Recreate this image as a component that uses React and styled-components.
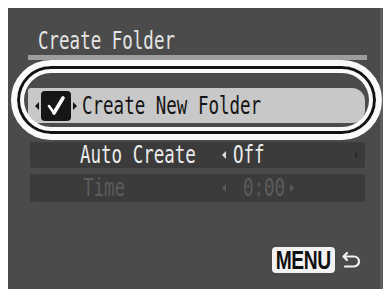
import React from "react"
import styled, { createGlobalStyle } from "styled-components"

const GlobalStyle = createGlobalStyle`
  html, body {
    margin: 0;
    padding: 0;
    background: #ffffff;
  }
  body {
    font-family: "DejaVu Sans Mono", "Liberation Mono", monospace;
  }
`

const Screen = styled.div`
  margin: 8px 0 0 8px;
  width: 372px;
  height: 281px;
  background: #4b4b4b;
  border-right: 3px solid #5d5d5d;
  display: flex;
  flex-direction: column;
  align-items: flex-start;
`

const Glyphs = styled.span`
  display: inline-block;
  white-space: pre;
  transform: scaleY(1.38);
  transform-origin: 50% 50%;
`

const Title = styled.div`
  margin: 24px 0 0 30px;
  height: 18px;
  line-height: 18px;
  font-size: 17.5px;
  color: #e4e4e4;
`

const Underline = styled.div`
  margin: 5px 0 0 20px;
  width: 339px;
  height: 5px;
  background: #9d9d9d;
`

const Rows = styled.div`
  display: flex;
  flex-direction: column;
  margin-top: 28px;
`

const Row = styled.div`
  position: relative;
  display: flex;
  align-items: center;
  box-sizing: border-box;
  height: ${p => p.$h}px;
  width: ${p => (p.$active ? 337 : 335)}px;
  margin: ${p => p.$mt}px 0 0 ${p => (p.$active ? 20 : 22)}px;
  padding-left: ${p => (p.$active ? 7 : 50)}px;
  background: ${p => (p.$active ? "#c8c8c8" : "#3b3b3b")};
  border-radius: ${p => (p.$active ? "3px 13px 13px 3px" : "3px")};
  font-size: 17.5px;
  line-height: 18px;
  color: ${p => (p.$active ? "#141414" : p.$dim ? "#5b5b5b" : "#ececec")};
`

const Ring = styled.div`
  position: absolute;
  left: -17px;
  right: -17px;
  top: -28px;
  bottom: -17px;
  border: 6px solid #fafafa;
  border-radius: 42px;
  box-shadow: inset 0 0 0 3px #121212, inset 0 0 0 7px #fafafa;
  pointer-events: none;
`

const Tri = styled.span`
  width: 0;
  height: 0;
  border-top: 4px solid transparent;
  border-bottom: 4px solid transparent;
  ${p =>
    p.$dir === "left"
      ? `border-right: 4px solid ${p.$color};`
      : `border-left: 4px solid ${p.$color};`}
  margin: 0 ${p => p.$mr || 0}px 0 ${p => p.$ml || 0}px;
  flex: none;
`

const Check = styled.span`
  width: 30px;
  height: 30px;
  border-radius: 4px;
  background: #161616;
  display: flex;
  align-items: center;
  justify-content: center;
  margin: 0 2px;
  flex: none;
`

const Label = styled.span`
  width: ${p => p.$w}px;
  padding-left: ${p => p.$pad || 0}px;
  box-sizing: border-box;
  flex: none;
`

const Value = styled.span`
  margin-left: ${p => p.$gap}px;
`

const Spacer = styled.span`
  flex: 1;
`

const Footer = styled.div`
  align-self: stretch;
  display: flex;
  justify-content: flex-end;
  align-items: center;
  gap: 6px;
  margin-top: 45px;
  padding-right: 17px;
`

const MenuBadge = styled.div`
  width: 63px;
  height: 26px;
  border-radius: 4px;
  background: #f2f2f2;
  display: flex;
  align-items: center;
  justify-content: center;
  overflow: visible;
  font-family: "Liberation Sans", Arial, sans-serif;
  font-weight: bold;
  font-size: 26px;
  line-height: 26px;
  color: #111;
`

const MenuText = styled.span`
  display: inline-block;
  transform: scaleX(0.74);
  letter-spacing: -0.5px;
`

const BackIcon = () => (
  <svg width="22" height="18" viewBox="0 0 22 18" fill="none" stroke="#f2f2f2" strokeWidth="2.2" strokeLinecap="round" strokeLinejoin="round">
    <path d="M6 2 L2.5 5.5 L6 9" />
    <path d="M3 5.5 H13 A5 5 0 0 1 13 15.5 H4" />
  </svg>
)

const CheckMark = () => (
  <svg width="22" height="22" viewBox="0 0 22 22" fill="none" stroke="#fafafa" strokeLinecap="round" strokeLinejoin="round">
    <path d="M4 11 L9 18" strokeWidth="2.6" />
    <path d="M9 18 L18 3" strokeWidth="3.6" />
  </svg>
)

const App = () => {
  return (
    <>
      <GlobalStyle />
      <Screen>
        <Title>
          <Glyphs>Create Folder</Glyphs>
        </Title>
        <Underline />
        <Rows>
          <Row $active $h={35} $mt={0}>
            <Tri $dir="left" $color="#141414" />
            <Check>
              <CheckMark />
            </Check>
            <Tri $dir="right" $color="#141414" $mr={5} />
            <Glyphs>Create New Folder</Glyphs>
            <Ring />
          </Row>
          <Row $h={26} $mt={19}>
            <Label $w={142}>
              <Glyphs>Auto Create</Glyphs>
            </Label>
            <Tri $dir="left" $color="#dcdcdc" />
            <Value $gap={7}>
              <Glyphs>Off</Glyphs>
            </Value>
            <Spacer />
            <Tri $dir="right" $color="#2c2c2c" $mr={6} />
          </Row>
          <Row $dim $h={28} $mt={6}>
            <Label $w={142} $pad={3}>
              <Glyphs>Time</Glyphs>
            </Label>
            <Tri $dir="left" $color="#5b5b5b" />
            <Value $gap={17}>
              <Glyphs>0:00</Glyphs>
            </Value>
            <Tri $dir="right" $color="#5b5b5b" $ml={5} />
          </Row>
        </Rows>
        <Footer>
          <MenuBadge>
            <MenuText>MENU</MenuText>
          </MenuBadge>
          <BackIcon />
        </Footer>
      </Screen>
    </>
  )
}

export default App
